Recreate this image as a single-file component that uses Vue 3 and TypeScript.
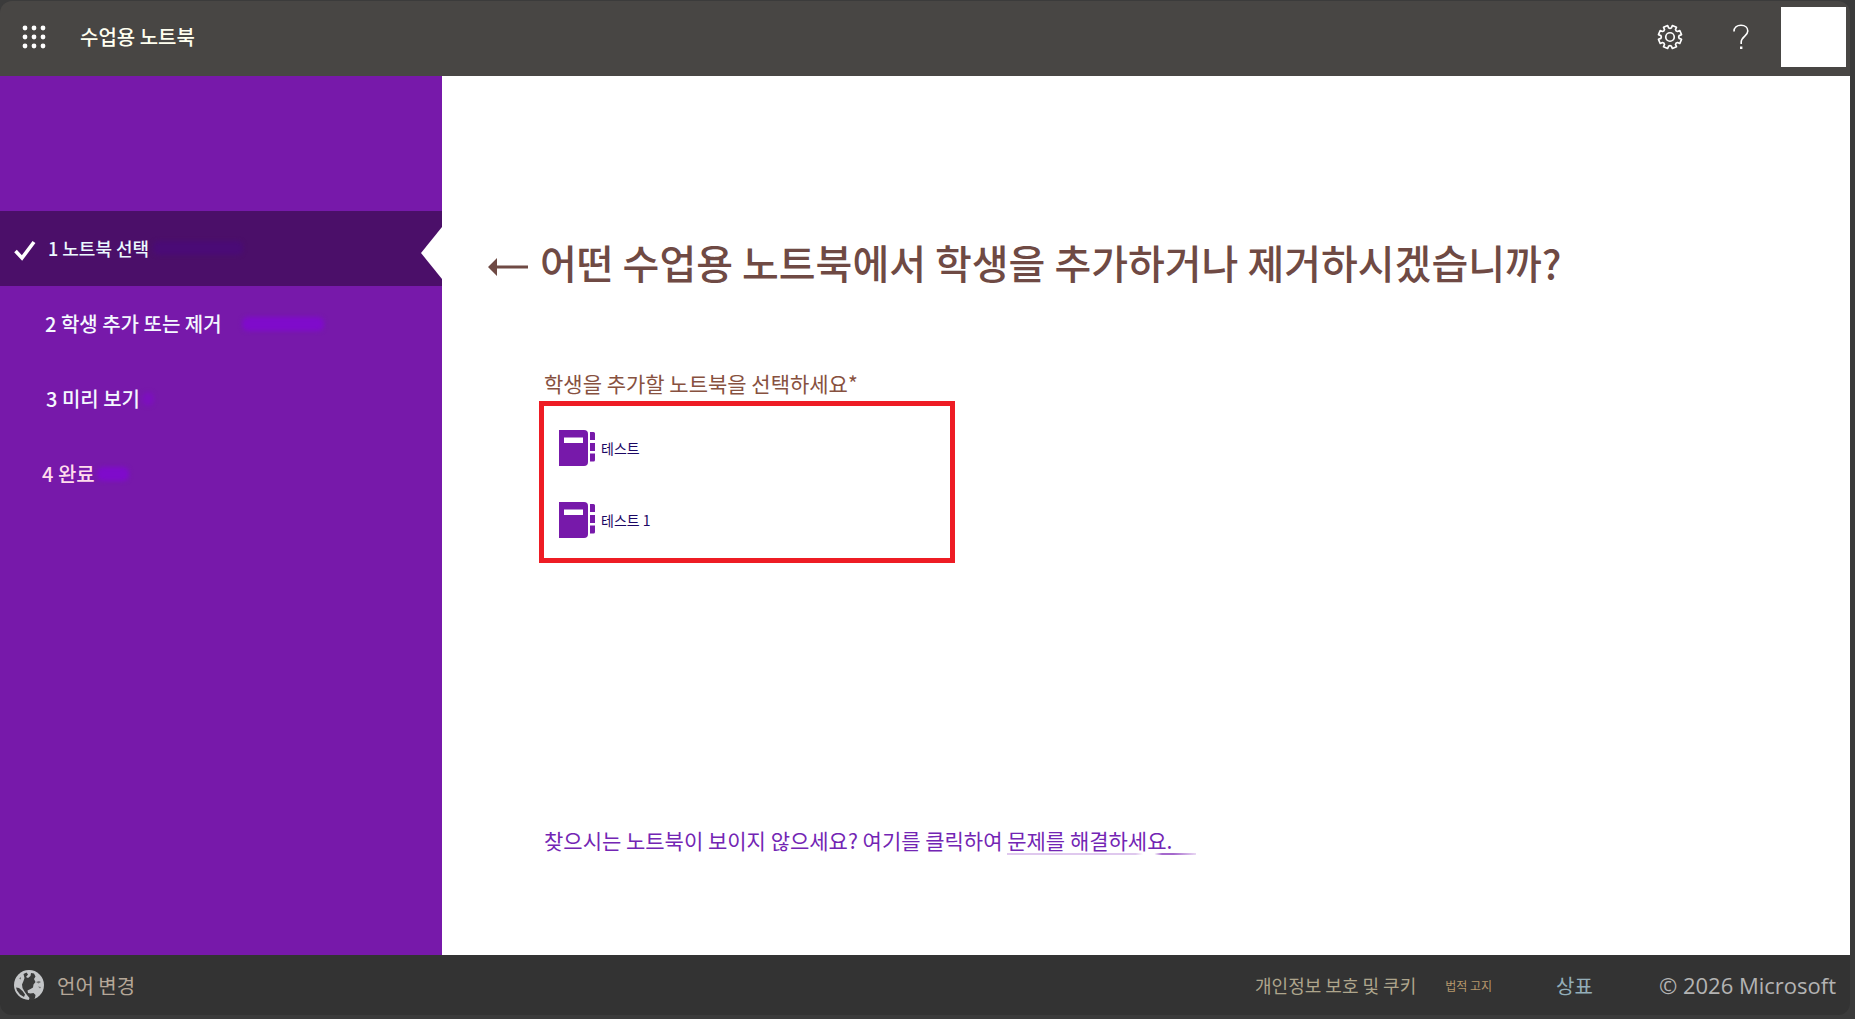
<script setup lang="ts">
interface Step {
  id: number
  label: string
  kind: string
}

interface Notebook {
  id: number
  name: string
}

const steps: Step[] = [
  { id: 1, label: '노트북 선택', kind: 'current' },
  { id: 2, label: '학생 추가 또는 제거', kind: 'second' },
  { id: 3, label: '미리 보기', kind: 'third' },
  { id: 4, label: '완료', kind: 'last' },
]

const notebooks: Notebook[] = [
  { id: 1, name: '테스트' },
  { id: 2, name: '테스트 1' },
]

const dots = [3, 12, 21]

// Outline of an eight-toothed gear centred on (12, 12)
const gear = Array.from({ length: 8 }, (_, i) => {
  const at = (r: number, deg: number) => {
    const a = ((i * 45 + 22.5 + deg) * Math.PI) / 180
    return `${(12 + r * Math.cos(a)).toFixed(2)} ${(12 + r * Math.sin(a)).toFixed(2)}`
  }
  return `${i ? 'L' : 'M'}${at(11.3, -11)} L${at(11.3, 11)} L${at(8.9, 14)} Q${at(7.8, 22.5)} ${at(8.9, 31)}`
}).join(' ') + ' Z'
</script>

<template>
  <div class="page">
    <header class="topbar">
      <button class="waffle" type="button" aria-label="앱 시작 관리자">
        <svg width="24" height="24" viewBox="0 0 24 24" fill="#fff">
          <template v-for="y in dots" :key="y">
            <circle v-for="x in dots" :key="x" :cx="x" :cy="y" r="2.4" />
          </template>
        </svg>
      </button>
      <span class="app-name">수업용 노트북</span>
      <div class="tools">
        <button type="button" aria-label="설정">
          <svg width="26" height="26" viewBox="-0.500 -0.500 25 25" fill="none" stroke="#fff" stroke-width="1.600" stroke-linejoin="round">
            <path :d="gear" />
            <circle cx="12" cy="12" r="4.100" />
          </svg>
        </button>
        <button type="button" aria-label="도움말">
          <svg width="16" height="26" viewBox="0 0 16 26" fill="none" stroke="#fff" stroke-width="1.600">
            <path d="M1 7.500C1 3.500 4 1.200 8 1.200s6.800 2.200 6.800 5.800c0 5-6.600 5.800-6.600 11v2" />
            <path d="M8.200 22.500v2.500" stroke-width="2.400" />
          </svg>
        </button>
        <button class="avatar" type="button" aria-label="계정"></button>
      </div>
    </header>

    <div class="body">
      <nav class="sidebar" aria-label="단계">
        <ol class="steps">
          <li v-for="step in steps" :key="step.id" class="step" :class="step.kind">
            <svg v-if="step.kind === 'current'" class="check" width="22" height="22" viewBox="0 0 22 22" fill="none" stroke="#fff" stroke-width="3.600">
              <path d="M1.500 11l6.500 7L20 2" />
            </svg>
            <span>{{ step.id }} {{ step.label }}</span>
            <span class="shade"></span>
          </li>
        </ol>
      </nav>

      <main class="content">
        <div class="title-row">
          <button class="back" type="button" aria-label="뒤로">
            <svg width="40" height="18" viewBox="0 0 40 18">
              <path d="M0 9L9 0v7.500h31v3H9V18z" fill="#6f4a44" />
            </svg>
          </button>
          <h1>어떤 수업용 노트북에서 학생을 추가하거나 제거하시겠습니까?</h1>
        </div>
        <section class="picker">
          <h2 id="picker-label">학생을 추가할 노트북을 선택하세요*</h2>
          <ul class="notebooks" aria-labelledby="picker-label">
            <li v-for="book in notebooks" :key="book.id">
              <button class="notebook" type="button">
                <svg width="36" height="36" viewBox="0 0 36 36" fill="#7719aa">
                  <path d="M0 0h25q4 0 4 4v28q0 4-4 4H0z" />
                  <path d="M5 7.500h19v5.500H5z" fill="#fff" />
                  <path d="M31 2h3.500q1.500 0 1.500 1.500V10h-5zM31 13h5v8h-5zM31 23.500h5V30q0 1.500-1.500 1.500H31z" />
                </svg>
                <span>{{ book.name }}</span>
              </button>
            </li>
          </ul>
        </section>
        <p class="help">
          찾으시는 노트북이 보이지 않으세요? 여기를 클릭하여 <a href="#">문제를 해결하세요.</a>
        </p>
      </main>
    </div>

    <footer class="footer">
      <a class="language" href="#">
        <svg width="30" height="30" viewBox="0 0 30 30">
          <circle cx="15" cy="15" r="15" fill="#c4c6c8" />
          <g fill="#3a3a3a">
            <path d="M9.500 4l3-1.500 1.500 2-2 2.500 2 1 2.500-2 .5-3 3 .5 1.500 3-1.500 2.500 1.500 3-2 2.500-.5 3-2.500 1.500-3 1.500.5 2.500 2.500.5 3-.5 2 2-.5 3-2 3-5 1 1.500-4-2.500-3-2.500-3.500-2-3.500-.5-3.500 1.500-3.500 1-3z" />
            <path d="M2 17.500l3 .5 3.500 3 2.500 3.500-1 2.500-4-2.500-3-4z" />
            <path d="M22 12l3-1 2 1-2.500 1.500zM24 16.500l3 .5-1 1.500zM5 8.500l2-1.500v2.500z" opacity=".6" />
          </g>
        </svg>
        <span>언어 변경</span>
      </a>
      <div class="legal">
        <a class="privacy" href="#">개인정보 보호 및 쿠키</a>
        <a class="notice" href="#">법적 고지</a>
        <a class="trademark" href="#">상표</a>
        <span class="copyright">© 2026 Microsoft</span>
      </div>
    </footer>
  </div>
</template>

<style>
body {
  background: #3b3b3b;
}
</style>

<style scoped>
.page {
  display: flex;
  flex-direction: column;
  box-sizing: border-box;
  min-height: 100vh;
  padding: 1px 5px 4px 0;
  font-family: "Noto Sans CJK KR", sans-serif;
}

button {
  padding: 0;
  border: 0;
  background: none;
  font: inherit;
  cursor: pointer;
}

svg {
  display: block;
  flex: none;
}

a {
  color: inherit;
  text-decoration: none;
}

.topbar {
  display: flex;
  align-items: center;
  box-sizing: border-box;
  height: 75px;
  padding: 0 4px 4px 22px;
  background: #484644;
  border-radius: 12px 12px 0 0;
}

.app-name {
  margin-left: 34px;
  color: #fffff0;
  font-size: 20px;
  font-weight: 500;
  line-height: 24px;
}

.tools {
  display: flex;
  align-items: center;
  gap: 50px;
  margin-left: auto;
}

.avatar {
  width: 65px;
  height: 60px;
  margin-left: -18px;
  background: #fff;
}

.body {
  display: flex;
  flex: 1;
}

.sidebar {
  flex: none;
  width: 442px;
  padding-top: 135px;
  box-sizing: border-box;
  background: #7719aa;
}

.steps {
  margin: 0;
  padding: 0;
  list-style: none;
}

.step {
  position: relative;
  display: flex;
  align-items: center;
  box-sizing: border-box;
  height: 75px;
  padding-left: 45px;
  color: #f4f8ff;
  font-size: 20px;
  font-weight: 500;
}

.step.current {
  padding: 0 0 2px 14px;
  background: #4b0f69;
  color: #ecfaff;
  font-size: 18px;
}

.step.current::after {
  content: "";
  position: absolute;
  top: 16px;
  right: 0;
  width: 21px;
  height: 52px;
  background: #fff;
  clip-path: polygon(100% 0, 100% 100%, 0 50%);
}

.check {
  margin: 6px 12px 0 0;
}

.step.third {
  padding-left: 46px;
}

.step.last {
  padding-left: 42px;
  color: #ffdcec;
}

.shade {
  height: 14px;
  border-radius: 6px;
  background: #7f0bcb;
  filter: blur(2px);
}

.current .shade {
  width: 90px;
  margin-left: 4px;
  background: #4a0b76;
}

.second .shade {
  width: 82px;
  margin-left: 20px;
}

.third .shade {
  width: 12px;
  margin-left: 2px;
  background: #7c10bd;
}

.last .shade {
  width: 32px;
  margin-left: 2px;
}

.content {
  flex: 1;
  min-width: 0;
  padding: 156px 24px 24px 46px;
  background: #fff;
}

.title-row {
  display: flex;
  align-items: center;
  gap: 12px;
}

.back {
  padding-top: 10px;
}

h1 {
  margin: 0;
  color: #6f4a44;
  font-size: 40px;
  font-weight: 500;
  line-height: 60px;
}

.picker {
  margin: 76px 0 0 51px;
}

h2 {
  margin: 0 0 3px 5px;
  color: #87513f;
  font-size: 21px;
  font-weight: 400;
  line-height: 30px;
}

.notebooks {
  display: flex;
  flex-direction: column;
  gap: 36px;
  box-sizing: border-box;
  width: 416px;
  max-width: 100%;
  margin: 0;
  padding: 24px 15px 20px;
  border: 5px solid #ee1c24;
  list-style: none;
}

.notebook {
  display: flex;
  align-items: center;
  gap: 6px;
  width: 100%;
  color: #1b0764;
  font-size: 14px;
  line-height: 20px;
}

.help {
  margin: 262px 0 0 56px;
  color: #7325b4;
  font-size: 21px;
  line-height: 30px;
}

.help a {
  padding-right: 24px;
  background: linear-gradient(90deg, #dfc8ee 0 68%, #fff 72% 78%, #a468cc 82% 88%, #ead9f4) 0 100% / 100% 2px no-repeat;
}

.footer {
  display: flex;
  align-items: center;
  height: 60px;
  padding: 0 14px;
  background: #333;
  border-radius: 0 0 12px 12px;
}

.language {
  display: flex;
  align-items: center;
  gap: 13px;
  color: #b5a798;
  font-size: 20px;
}

.legal {
  display: flex;
  align-items: center;
  margin-left: auto;
}

.privacy {
  color: #aea58c;
  font-size: 18px;
}

.notice {
  margin-left: 29px;
  color: #b5976c;
  font-size: 12px;
}

.trademark {
  margin-left: 64px;
  color: #94aeb9;
  font-size: 20px;
}

.copyright {
  margin-left: 66px;
  color: #b3b3b3;
  font-family: "Open Sans", "Noto Sans", sans-serif;
  font-size: 22px;
}
</style>
